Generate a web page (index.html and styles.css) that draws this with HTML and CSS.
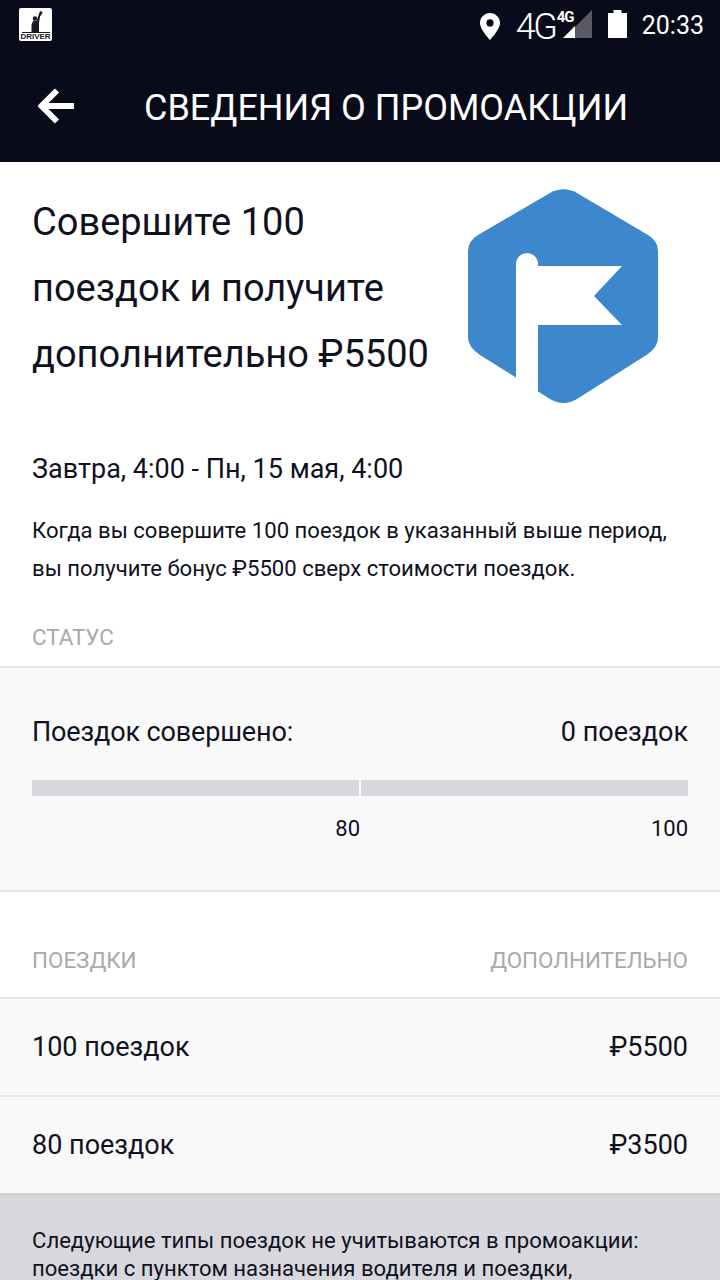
FILE: index.html
```html
<!DOCTYPE html>
<html lang="ru">
<head>
    <meta charset="UTF-8">
    <meta name="viewport" content="width=device-width, initial-scale=1.0">
    <title>Сведения о промоакции</title>
    <link rel="stylesheet" href="styles.css">
</head>
<body>
    <div class="app">
        <div class="status-bar">
            <div class="app-badge">
                <svg class="badge-figure" viewBox="0 0 33 24" width="33" height="24">
                    <circle cx="16" cy="10.500" r="2.200" fill="#1a1a22"/>
                    <path fill="#1a1a22" d="M21 3 L23.500 4 L22.500 6.500 L21 8.500 L20 15 L20 24 L12.500 24 L12.500 17 L13.500 14 L15 12.500 L17.500 13 L19.300 8 Z"/>
                </svg>
                <span class="badge-rule"></span>
                <span class="badge-text">DRIVER</span>
            </div>
            <div class="status-icons">
                <svg class="icon-pin" viewBox="0 0 20 27" width="20" height="27">
                    <path fill="#fff" fill-rule="evenodd" d="M10 0C4.500 0 0 4.400 0 10c0 6.500 10 17 10 17s10-10.500 10-17C20 4.400 15.500 0 10 0zM10 13.500A3.600 3.600 0 1 1 10 6.300a3.600 3.600 0 0 1 0 7.200z"/>
                </svg>
                <span class="net-big">4G</span>
                <div class="signal">
                    <svg viewBox="0 0 29 28" width="29" height="28">
                        <path fill="#5a5a66" d="M29 0V28H12V17z"/>
                        <path fill="#fff" d="M12 16V28H0z"/>
                    </svg>
                    <span class="net-small">4G</span>
                </div>
                <svg class="icon-battery" viewBox="0 0 19 28" width="19" height="28">
                    <path fill="#fff" d="M5.500 0H13.500V3H19V28H0V3H5.500z"/>
                </svg>
                <span class="clock">20:33</span>
            </div>
        </div>

        <header class="toolbar">
            <svg class="icon-back" viewBox="0 0 36 36" width="36" height="36">
                <path fill="none" stroke="#fff" stroke-width="6" d="M36 18H5M19 2.500 3.500 18 19 33.500"/>
            </svg>
            <h1>Сведения о промоакции</h1>
        </header>

        <section class="intro">
            <div class="intro-top">
                <h2>Совершите 100 поездок и получите дополнительно ₽5500</h2>
                <svg class="promo-logo" viewBox="0 0 190 215" width="190" height="215">
                    <path fill="#3d87cd" d="M82 4Q95.500 -3.500 109 4L180 46Q190 52 190 62V148Q190 158 180 165L109 210Q95.500 218 82 210L12 166Q0 158 0 148V62Q0 52 10 46Z"/>
                    <path fill="#fff" d="M48 192V75A11 11 0 0 1 70 75V77H154L126 107 154 136H70V210Z"/>
                </svg>
            </div>
            <p class="dates">Завтра, 4:00 - Пн, 15 мая, 4:00</p>
            <p class="desc">Когда вы совершите 100 поездок в указанный выше период,<br>вы получите бонус ₽5500 сверх стоимости поездок.</p>
        </section>

        <div class="section-head status-head"><span>Статус</span></div>

        <section class="progress">
            <div class="progress-row">
                <span class="progress-label">Поездок совершено:</span>
                <span>0 поездок</span>
            </div>
            <div class="bar">
                <div class="bar-part"></div>
                <div class="bar-part"></div>
            </div>
            <div class="bar-labels">
                <span class="label-first">80</span>
                <span class="label-second">100</span>
            </div>
        </section>

        <div class="section-head trips-head">
            <span>Поездки</span>
            <span>Дополнительно</span>
        </div>

        <div class="tier"><span>100 поездок</span><span>₽5500</span></div>
        <div class="tier"><span>80 поездок</span><span>₽3500</span></div>

        <footer class="note">
            Следующие типы поездок не учитываются в промоакции: поездки с пунктом назначения водителя и поездки,
        </footer>
    </div>
</body>
</html>
```

FILE: styles.css
```css
:root {
    --dark: #090a1a;
    --text: #10111f;
    --muted: #a9a9ae;
    --line: #e6e6e6;
    --light-bg: #f9f9f9;
    --grey: #d8d8dc;
}
html, body {
    margin: 0;
    height: 1280px;
    overflow: hidden;
}
body {
    font-family: Roboto, "Noto Sans", sans-serif;
    background-color: #fff;
    color: var(--text);
}
.app {
    width: 720px;
}

/* status bar */
.status-bar {
    height: 48px;
    background-color: var(--dark);
    display: flex;
    justify-content: space-between;
    padding: 8px 16px 0 19px;
    box-sizing: border-box;
    color: #fff;
}
.app-badge {
    width: 33px;
    height: 33px;
    background-color: #fff;
    border-radius: 2px;
    display: flex;
    flex-direction: column;
    align-items: center;
    overflow: hidden;
}
.badge-figure {
    flex: none;
}
.badge-rule {
    flex: none;
    width: 28px;
    height: 1px;
    background-color: #1a1a22;
}
.badge-text {
    font-size: 8px;
    line-height: 8px;
    font-weight: 700;
    color: #1a1a22;
    font-family: "Liberation Sans", sans-serif;
}
.status-icons {
    display: flex;
    align-items: flex-start;
}
.icon-pin {
    margin: 5px 16px 0 0;
}
.net-big {
    font-size: 36px;
    line-height: 36px;
    letter-spacing: -2.5px;
    font-weight: 300;
    margin-top: 1px;
    width: 40px;
}
.signal {
    position: relative;
    width: 36px;
    height: 32px;
}
.signal svg {
    position: absolute;
    left: 7px;
    top: 2px;
}
.net-small {
    position: absolute;
    left: 1px;
    top: 2px;
    font-size: 15px;
    line-height: 15px;
    font-weight: 700;
    letter-spacing: -1px;
}
.icon-battery {
    margin: 2px 15px 0 16px;
}
.clock {
    font-size: 25px;
    line-height: 36px;
}

/* toolbar */
.toolbar {
    height: 114px;
    background-color: var(--dark);
    display: flex;
    align-items: center;
    padding-left: 38px;
    box-sizing: border-box;
    color: #fff;
}
.icon-back {
    flex: none;
    margin-top: 1px;
}
.toolbar h1 {
    margin: 5px 0 0 70px;
    font-size: 36px;
    font-weight: 400;
    text-transform: uppercase;
    white-space: nowrap;
}

/* intro */
.intro {
    padding: 27px 32px 0;
}
.intro-top {
    display: flex;
    justify-content: space-between;
    align-items: flex-start;
}
.intro-top h2 {
    margin: 0;
    width: 410px;
    font-size: 38px;
    line-height: 66px;
    font-weight: 400;
}
.promo-logo {
    flex: none;
    margin-right: 30px;
}
.dates {
    margin: 45px 0 0;
    font-size: 27px;
    line-height: 40px;
}
.desc {
    margin: 22px 0 0;
    font-size: 22.1px;
    line-height: 38px;
    white-space: nowrap;
}

/* section headers */
.section-head {
    display: flex;
    justify-content: space-between;
    padding: 0 32px;
    font-size: 22.4px;
    color: var(--muted);
    text-transform: uppercase;
    align-items: center;
}
.status-head {
    height: 58px;
    margin-top: 21px;
}
.trips-head {
    height: 105px;
    padding-top: 30px;
    box-sizing: border-box;
}

/* progress */
.progress {
    background-color: var(--light-bg);
    border-top: 2px solid var(--line);
    border-bottom: 2px solid var(--line);
    padding: 0 32px;
    height: 222px;
}
.progress-row {
    display: flex;
    justify-content: space-between;
    font-size: 27px;
    line-height: 40px;
    padding-top: 44px;
}
.progress-label {
    letter-spacing: -0.15px;
}
.bar, .bar-labels {
    display: flex;
    gap: 2px;
}
.bar {
    margin-top: 28px;
}
.bar-part {
    flex: 1;
    height: 16px;
    background-color: var(--grey);
}
.bar-labels {
    margin-top: 19px;
    font-size: 22px;
    line-height: 28px;
    text-align: right;
}
.label-first {
    width: 328px;
}
.label-second {
    width: 326px;
}

/* tiers */
.tier {
    height: 96px;
    background-color: var(--light-bg);
    border-top: 2px solid var(--line);
    display: flex;
    justify-content: space-between;
    align-items: center;
    padding: 0 32px;
    font-size: 27px;
}
.note {
    background-color: var(--grey);
    border-top: 2px solid #d0d0d4;
    padding: 31px 32px 40px;
    font-size: 22.1px;
    line-height: 28px;
}
```
